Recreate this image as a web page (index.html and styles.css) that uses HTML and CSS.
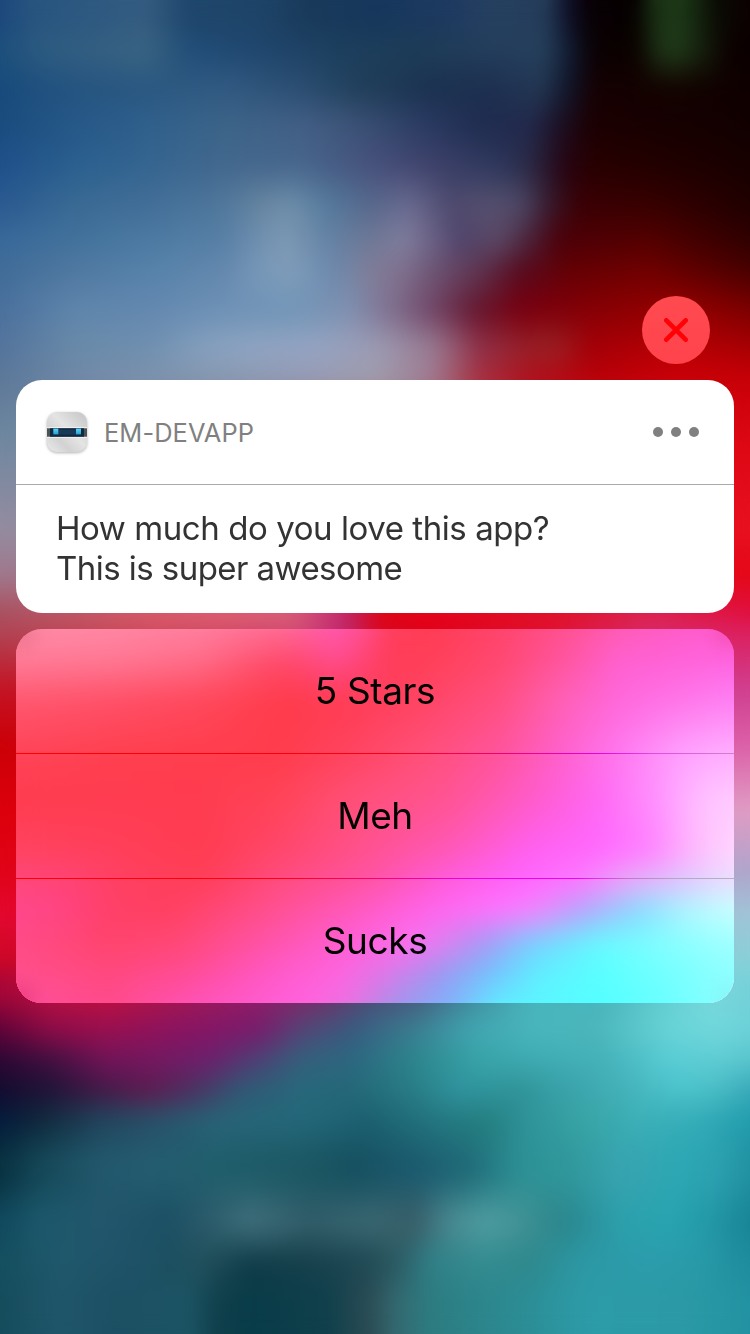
FILE: index.html
```html
<!DOCTYPE html>
<html lang="en">
<head>
<meta charset="utf-8">
<title>EM-DEVAPP notification</title>
<link rel="stylesheet" href="styles.css">
</head>
<body>
<div class="screen">
  <div class="wallpaper" aria-hidden="true">
    <i class="w0"></i><i class="w1"></i><i class="w2"></i><i class="w3"></i><i class="w4"></i><i class="w5"></i><i class="w6"></i><i class="w7"></i><i class="w8"></i><i class="w9"></i><i class="w10"></i><i class="w11"></i><i class="w12"></i><i class="w13"></i><i class="w14"></i><i class="w15"></i><i class="w16"></i><i class="w17"></i><i class="w18"></i><i class="w19"></i><i class="w20"></i><i class="w21"></i><i class="w22"></i><i class="w23"></i><i class="w24"></i><i class="w25"></i><i class="w26"></i><i class="w27"></i><i class="w28"></i><i class="w29"></i><i class="w30"></i>
    <b class="soften"></b>
  </div>
  <main class="notification">
    <button class="close" aria-label="Close">
      <svg width="24" height="24" viewBox="0 0 24 24"><path d="M2.3 2.3L21.7 21.7M21.7 2.3L2.3 21.7" stroke="#ff0006" stroke-width="4.6" stroke-linecap="round"/></svg>
    </button>
    <section class="card">
      <header class="card-head">
        <svg class="app-icon" width="46" height="46" viewBox="0 0 46 46">
          <defs>
            <linearGradient id="shell" x1="1" y1="0" x2="0" y2="1"><stop offset="0" stop-color="#c4c4c4"/><stop offset=".45" stop-color="#e4e4e4"/><stop offset=".7" stop-color="#d2d2d2"/><stop offset="1" stop-color="#ececec"/></linearGradient>
            <linearGradient id="eye" x1="0" y1="0" x2="0" y2="1"><stop offset="0" stop-color="#5ad4f8"/><stop offset="1" stop-color="#249fd0"/></linearGradient>
          </defs>
          <rect x="3" y="3" width="40" height="40" rx="10" fill="url(#shell)"/>
          <path d="M3.2 18.8H43M3.2 28.2H43" stroke="#f8f8f8" stroke-width="1"/>
          <rect x="3" y="19.3" width="40" height="8.4" fill="#4a5358"/>
          <rect x="6" y="19.3" width="34" height="8.4" fill="#11293f"/>
          <rect x="14" y="20.6" width="19" height="5" fill="#17395a"/>
          <rect x="9.3" y="19.6" width="5" height="5.8" fill="url(#eye)"/>
          <rect x="32" y="19.6" width="5" height="5.8" fill="url(#eye)"/>
        </svg>
        <span class="app-name">EM-DEVAPP</span>
        <svg class="more" width="46" height="10" viewBox="0 0 46 10" fill="#808080"><circle cx="5" cy="5" r="5"/><circle cx="23" cy="5" r="5"/><circle cx="41" cy="5" r="5"/></svg>
      </header>
      <p class="message"><span class="line-a">How much do you love this app?</span><br><span class="line-b">This is super awesome</span></p>
    </section>
    <div class="actions">
      <div class="tint" aria-hidden="true"><i class="t0"></i><i class="t1"></i><i class="t2"></i><i class="t3"></i><i class="t4"></i><i class="t5"></i><i class="t6"></i><i class="t7"></i><i class="t8"></i><i class="t9"></i><i class="t10"></i><b class="soften"></b></div>
      <div class="action-list">
        <button class="action">5 Stars</button>
        <div class="rule rule-a"></div>
        <button class="action">Meh</button>
        <div class="rule rule-b"></div>
        <button class="action">Sucks</button>
      </div>
    </div>
  </main>
</div>
</body>
</html>
```

FILE: styles.css
```css
* { box-sizing: border-box; }
body { margin: 0; font-family: Inter, "Liberation Sans", sans-serif; }
button { border: 0; padding: 0; margin: 0; background: none; font: inherit; color: inherit; }

.screen { display: grid; width: 750px; height: 1334px; overflow: hidden; }
.wallpaper, .notification { grid-area: 1 / 1; }

/* Colour fields: each band fades in from --a and is solid from --b downwards. */
.wallpaper, .tint { display: grid; }
.wallpaper i, .tint i {
  grid-area: 1 / 1;
  -webkit-mask-image: linear-gradient(transparent var(--a), #000 var(--b));
  mask-image: linear-gradient(transparent var(--a), #000 var(--b));
}
.wallpaper .w0, .tint .t0 { -webkit-mask-image: none; mask-image: none; }
.soften { grid-area: 1 / 1; backdrop-filter: blur(11px); }
.wallpaper .soften { backdrop-filter: blur(9px); }

.w0 { background: linear-gradient(90deg, #1b477c 0, #27547f 30px, #2c5880 75px, #345c80 145px, #1f466c 190px, #1e4468 260px, #193a5a 310px, #17375c 380px, #1e3a60 450px, #254060 490px, #253d5a 545px, #10132c 567px, #090005 588px, #060000 635px, #1a3014 655px, #1d3a18 680px, #0a0b04 718px, #0c0000 750px); }
.w1 { --a: 20px; --b: 50px; background: linear-gradient(90deg, #1d4f7c 0, #2c5b80 40px, #345f82 90px, #3a6482 145px, #214e78 190px, #20466e 260px, #1d3f5e 340px, #1d3c56 420px, #243e5c 490px, #25405c 545px, #111a30 570px, #0a0002 595px, #0c0400 640px, #1a2c14 655px, #213e1a 675px, #15200e 702px, #0c0000 730px); }
.w2 { --a: 50px; --b: 88px; background: linear-gradient(90deg, #184b7c 0, #255480 75px, #2a5881 150px, #325a82 225px, #2b4e72 300px, #203f5a 360px, #1b3250 430px, #1d2f50 490px, #243854 540px, #101428 570px, #160002 595px, #120300 675px, #100000 750px); }
.w3 { --a: 88px; --b: 125px; background: linear-gradient(90deg, #1a4c7e 0, #265888 75px, #30608c 150px, #3c6488 225px, #435f86 300px, #3d5478 350px, #2c3c64 420px, #1f2c50 480px, #22294c 530px, #1c1024 560px, #1c0002 590px, #120000 750px); }
.w4 { --a: 125px; --b: 165px; background: linear-gradient(90deg, #20508a 0, #2b608f 75px, #356590 150px, #43688e 225px, #47668c 300px, #474f7a 380px, #3c4068 440px, #2d375c 500px, #2a2844 530px, #260412 565px, #280000 595px, #180000 750px); }
.w5 { --a: 165px; --b: 205px; background: linear-gradient(90deg, #2a5a90 0, #3a6a94 75px, #426e98 150px, #51789c 225px, #6685a0 260px, #6e8fab 290px, #54799c 330px, #56688c 370px, #6a6a90 410px, #4e4a6e 450px, #56506f 490px, #4f4a68 520px, #371c30 548px, #3a0004 578px, #380000 650px, #200000 750px); }
.w6 { --a: 205px; --b: 240px; background: linear-gradient(90deg, #39699a 0, #42729c 75px, #4c7aa2 150px, #5880a6 225px, #7090b0 260px, #7d99b4 285px, #6482a4 330px, #6e7896 370px, #807e9e 405px, #6d6488 430px, #50446c 460px, #5b4864 500px, #4a2038 530px, #4c0008 560px, #540000 650px, #300000 750px); }
.w7 { --a: 240px; --b: 270px; background: linear-gradient(90deg, #406c98 0, #5078a0 75px, #5682aa 150px, #6488ae 225px, #7898b8 260px, #809dba 290px, #6c8aae 330px, #7f7d98 370px, #80728f 400px, #6a506f 440px, #5e3450 480px, #560c20 520px, #640004 570px, #700000 650px, #480000 750px); }
.w8 { --a: 270px; --b: 310px; background: linear-gradient(90deg, #4a709c 0, #5f86ac 75px, #6488b0 150px, #6e92b6 225px, #7396b8 300px, #8090b0 350px, #80708f 390px, #72486a 430px, #651830 475px, #780010 520px, #880004 600px, #980000 680px, #7c0000 750px); }
.w9 { --a: 310px; --b: 348px; background: linear-gradient(90deg, #54749c 0, #6a8aa8 75px, #7090b0 150px, #86a0be 205px, #8fa4c2 250px, #96a4c2 320px, #9c9ab2 380px, #98788f 435px, #903048 480px, #981e26 530px, #9a2024 555px, #a40008 590px, #b80004 680px, #a80004 750px); }
.w10 { --a: 348px; --b: 380px; background: linear-gradient(90deg, #5c7898 0, #7088a8 75px, #7c92ac 150px, #8898b0 225px, #949ab4 300px, #a09cac 375px, #a07c92 430px, #a83040 480px, #b0101c 530px, #bc0008 600px, #cc0008 680px, #c80008 750px); }
.w11 { --a: 380px; --b: 440px; background: linear-gradient(90deg, #7088a0 20px, #dc0814 730px); }
.w12 { --a: 440px; --b: 530px; background: linear-gradient(90deg, #948ca0 20px, #e81020 730px); }
.w13 { --a: 530px; --b: 575px; background: linear-gradient(90deg, #a0788c 20px, #e40818 730px); }
.w14 { --a: 575px; --b: 613px; background: linear-gradient(90deg, #a85060 0, #c05664 75px, #d85a6a 150px, #e06070 225px, #dc6078 290px, #c8387a 330px, #c02060 350px, #e00010 382px, #e60018 430px, #e01028 550px, #dc2450 650px, #e01040 750px); }
.w15 { --a: 613px; --b: 633px; background: linear-gradient(90deg, #b04454 0, #d04c5c 150px, #d04874 300px, #c0286a 345px, #d80820 380px, #e00018 430px, #e01030 550px, #d82868 650px, #dc2060 750px); }
.w16 { --a: 633px; --b: 690px; background: linear-gradient(90deg, #c41424 20px, #d04090 730px); }
.w17 { --a: 690px; --b: 745px; background: linear-gradient(90deg, #cc0008 20px, #dc60a8 730px); }
.w18 { --a: 745px; --b: 810px; background: linear-gradient(90deg, #dc000c 20px, #e09cc4 730px); }
.w19 { --a: 810px; --b: 870px; background: linear-gradient(90deg, #e00418 20px, #b0a4cc 730px); }
.w20 { --a: 870px; --b: 915px; background: linear-gradient(90deg, #e40830 20px, #a0c4d8 730px); }
.w21 { --a: 915px; --b: 960px; background: linear-gradient(90deg, #cc0828 20px, #88d0d8 730px); }
.w22 { --a: 960px; --b: 985px; background: linear-gradient(90deg, #a40638 0, #b81040 50px, #c01040 110px, #a41850 180px, #941c68 250px, #782c68 320px, #4c4c78 370px, #485c80 420px, #408a9c 470px, #48b4bc 530px, #48b4bc 600px, #60ccd0 660px, #78d8dc 710px, #74d0d8 750px); }
.w23 { --a: 995px; --b: 1030px; background: linear-gradient(90deg, #5c0438 0, #8c0c48 50px, #981050 105px, #881464 190px, #781c6c 258px, #504878 306px, #385c80 354px, #3a7c90 411px, #40a4b0 469px, #48b4bc 526px, #4cb8bc 598px, #68d4d8 670px, #70d8dc 718px, #6cd0d8 750px); }
.w24 { --a: 1030px; --b: 1060px; background: linear-gradient(90deg, #2c0834 0, #401040 50px, #701458 105px, #741860 150px, #6c206c 210px, #503c74 250px, #34607c 300px, #2c6880 354px, #2c848c 411px, #38a4a8 480px, #40acb4 550px, #44b0b8 600px, #58ccd4 670px, #60ccd4 718px, #58c4cc 750px); }
.w25 { --a: 1060px; --b: 1090px; background: linear-gradient(90deg, #140c30 0, #201438 50px, #441a48 105px, #5c1c50 150px, #4c3060 190px, #305874 240px, #28687c 300px, #246878 354px, #287c84 411px, #3094a0 460px, #2f9398 520px, #38a0a8 560px, #44b0b8 620px, #4cc4cc 680px, #48bcc4 718px, #38a8b8 750px); }
.w26 { --a: 1090px; --b: 1120px; background: linear-gradient(90deg, #041c3c 0, #10283c 40px, #20445c 100px, #285068 150px, #286478 220px, #24687a 300px, #1c6070 370px, #247880 440px, #248080 490px, #30949c 530px, #38a4a4 580px, #3cb0b8 640px, #34acb8 700px, #229cac 750px); }
.w27 { --a: 1120px; --b: 1160px; background: linear-gradient(90deg, #083040 0, #144858 40px, #22586c 100px, #245c70 150px, #205e6c 220px, #1c5864 300px, #165060 355px, #1c5c70 420px, #206c78 470px, #2c9094 520px, #30989c 570px, #38a4b0 620px, #2ca8b4 680px, #2ca0b0 720px, #2090a0 750px); }
.w28 { --a: 1175px; --b: 1218px; background: linear-gradient(90deg, #10485c 0, #1c586c 40px, #22566c 100px, #1c5064 170px, #2a5a6a 205px, #3e6e7a 250px, #305c68 310px, #386670 370px, #385e68 415px, #488890 450px, #4c9ca0 485px, #449498 515px, #30888c 550px, #2a8890 570px, #2ca0ac 620px, #28a4b0 670px, #2498a8 710px, #188494 750px); }
.w29 { --a: 1225px; --b: 1262px; background: linear-gradient(90deg, #14505f 0, #20586c 60px, #1f5268 130px, #1c5060 170px, #22505c 205px, #103c48 250px, #16404c 310px, #204a55 370px, #2c5c64 400px, #308088 430px, #348c90 480px, #2e888c 530px, #2c98a4 580px, #2c9cac 650px, #289aa8 700px, #1e8c9c 750px); }
.w30 { --a: 1262px; --b: 1300px; background: linear-gradient(90deg, #154c5c 0, #20566a 60px, #1c5064 115px, #1c5464 190px, #10404c 215px, #083c48 250px, #10404c 330px, #2c4c54 370px, #346870 395px, #2c7c80 430px, #2c8c94 520px, #2c9ca8 590px, #2c9aa6 680px, #2292a2 750px); }

.notification { position: relative; display: flex; flex-direction: column; padding: 296px 16px 0; }

.close { display: flex; align-items: center; justify-content: center; align-self: flex-end; width: 68px; height: 68px; margin: 0 24px 16px 0; border-radius: 50%; background: linear-gradient(#ff4a50, #ff434c); }

.card { height: 233px; border-radius: 26px; background: #fff; }
.card-head { display: flex; align-items: center; height: 105px; padding: 0 35px 0 28px; border-bottom: 1px solid #a9a9a9; }
.app-icon { display: block; filter: drop-shadow(0 1px 1.5px rgba(0, 0, 0, .3)); }
.app-name { margin-left: 14px; font-size: 25.4px; color: #808080; letter-spacing: .1px; }
.more { display: block; margin-left: auto; }
.message { margin: 0; padding: 23px 40px 0; font-size: 33px; line-height: 40px; color: #333; white-space: nowrap; }
.line-a { letter-spacing: -.43px; }
.line-b { letter-spacing: -.55px; }

.actions { display: grid; height: 374px; margin-top: 16px; border-radius: 26px; overflow: hidden; }
.tint, .action-list { grid-area: 1 / 1; }
.action-list { position: relative; display: flex; flex-direction: column; }
.action { display: flex; align-items: center; justify-content: center; height: 124px; padding-bottom: 2px; font-size: 37px; letter-spacing: -.4px; color: #000; }
.rule { height: 1px; }
.rule-a { background: linear-gradient(90deg, #ff0000 0, #f80014 370px, #f0006c 480px, #e800d4 580px, #dc50dc 640px, #d080d0 718px); }
.rule-b { background: linear-gradient(90deg, #ff0000 0, #ff0010 260px, #f8007c 370px, #f000e0 450px, #f000f8 560px, #cc70cc 610px, #b4a8c4 660px, #b8b0c4 718px); }

.t0 { background: linear-gradient(90deg, #ff8ca8 0, #ff88a4 94px, #ff80a0 184px, #ff7098 264px, #ff58b0 320px, #ff5090 347px, #ff4060 372px, #ff3c54 414px, #ff446c 484px, #ff508c 544px, #ff5cb4 604px, #ff5ccc 684px, #ff5cc8 718px); }
.t1 { --a: 0px; --b: 31px; background: linear-gradient(90deg, #ff7c98 0, #ff7894 94px, #ff6c88 184px, #ff4c6c 254px, #ff4870 284px, #ff4c90 319px, #ff4474 349px, #ff3c58 374px, #ff4058 414px, #ff4870 484px, #ff549c 544px, #ff60d0 604px, #ff64e0 718px); }
.t2 { --a: 31px; --b: 71px; background: linear-gradient(90deg, #ff5870 0, #ff5068 94px, #ff485c 184px, #ff3c4c 264px, #ff3c54 334px, #ff4464 404px, #ff5080 484px, #ff60b4 544px, #ff68dc 604px, #ff80f4 718px); }
.t3 { --a: 71px; --b: 124px; background: linear-gradient(90deg, #ff4458 0, #ff4050 94px, #ff3c4c 264px, #ff4460 334px, #ff5078 404px, #ff549c 484px, #ff60cc 544px, #ff78f0 604px, #ffa0ff 664px, #ffb0ff 718px); }
.t4 { --a: 124px; --b: 171px; background: linear-gradient(90deg, #ff3c50 0, #ff3c50 184px, #ff4458 264px, #ff5078 334px, #ff5494 434px, #ff5cd0 524px, #ff68f4 584px, #ff94ff 644px, #ffc0ff 684px, #ffccff 718px); }
.t5 { --a: 171px; --b: 221px; background: linear-gradient(90deg, #ff4460 0, #ff405c 84px, #ff3c50 184px, #ff4464 244px, #ff5088 334px, #ff58b8 434px, #ff60f0 514px, #ff68ff 584px, #ff80ff 634px, #ffb4fc 674px, #ffd8ff 718px); }
.t6 { --a: 221px; --b: 251px; background: linear-gradient(90deg, #ff487c 0, #ff4478 44px, #ff4060 114px, #ff3e58 184px, #ff4c80 264px, #ff54a4 354px, #ff5ce0 434px, #ff64ff 504px, #ff78ff 564px, #ecaaf8 614px, #e0c4ff 664px, #ece0ff 718px); }
.t7 { --a: 251px; --b: 281px; background: linear-gradient(90deg, #ff488c 0, #ff4484 44px, #ff4068 94px, #ff4060 154px, #ff5090 254px, #ff58bc 334px, #ff64ec 414px, #ff74ff 484px, #f484fc 519px, #b8a4fc 564px, #88dcff 624px, #b0f8ff 674px, #c8ffff 718px); }
.t8 { --a: 281px; --b: 316px; background: linear-gradient(90deg, #ff4c88 0, #ff446c 94px, #ff4878 164px, #ff54ac 254px, #ff60d8 334px, #fc70f0 394px, #e080f0 424px, #a898f4 464px, #74d0ff 514px, #64fcff 584px, #80ffff 644px, #a0ffff 718px); }
.t9 { --a: 316px; --b: 346px; background: linear-gradient(90deg, #ff508c 0, #ff4880 94px, #ff4c98 174px, #ff58c8 254px, #ff64e0 324px, #dc78e8 369px, #9898f0 424px, #74c0ff 474px, #60f0ff 524px, #58ffff 584px, #90ffff 718px); }
.t10 { --a: 346px; --b: 374px; background: linear-gradient(90deg, #ff50a0 0, #ff4c8c 94px, #ff54bc 184px, #ff64e0 294px, #e474e0 334px, #9c98ec 384px, #80b4fc 434px, #5ff0ff 484px, #54ffff 584px, #68ffff 644px, #90ffff 718px); }
```
